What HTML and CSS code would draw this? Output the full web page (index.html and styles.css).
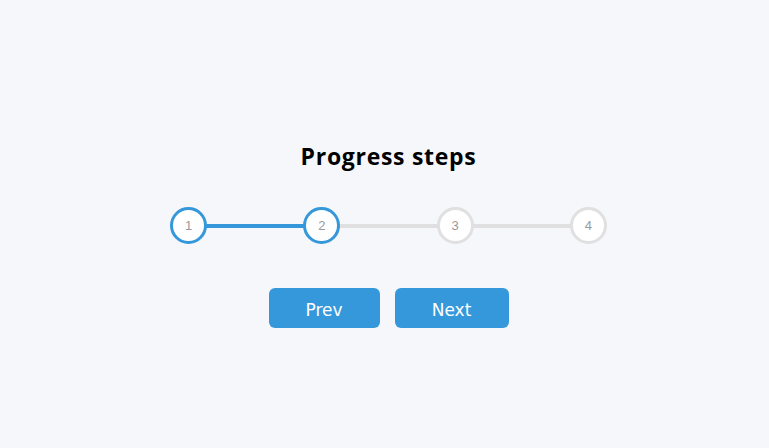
FILE: index.html
```html
<!DOCTYPE html>
<html lang="en">
<head>
<meta charset="utf-8">
<title>Progress steps</title>
<link rel="stylesheet" href="styles.css">
</head>
<body>
<main class="page">
  <h1 class="title">Progress steps</h1>
  <div class="steps">
    <div class="track"></div>
    <div class="track-fill" style="width: 33.33%"></div>
    <div class="circle active">1</div>
    <div class="circle active">2</div>
    <div class="circle">3</div>
    <div class="circle">4</div>
  </div>
  <div class="actions">
    <button class="btn btn-prev">Prev</button>
    <button class="btn btn-next">Next</button>
  </div>
</main>
</body>
</html>
```
FILE: styles.css
```css
html, body {
  margin: 0;
  padding: 0;
}
body {
  background: #f6f7fb;
  font-family: "Open Sans", "Noto Sans", sans-serif;
  height: 448px;
  overflow: hidden;
}
.page {
  display: flex;
  flex-direction: column;
  align-items: center;
  padding-top: 143px;
  padding-left: 8px;
}
.title {
  margin: 0;
  font-size: 23px;
  line-height: 26px;
  font-weight: 700;
  letter-spacing: 0.7px;
  color: #000;
  font-family: "Open Sans", "Noto Sans", sans-serif;
}
.steps {
  position: relative;
  width: 437px;
  margin-top: 38px;
  display: flex;
  justify-content: space-between;
  align-items: center;
}
.track, .track-fill {
  position: absolute;
  top: 50%;
  left: 18px;
  height: 4px;
  transform: translateY(-50%);
}
.track {
  right: 18px;
  background: #e0e0e0;
}
.track-fill {
  background: #3498db;
  max-width: calc(100% - 36px);
}
.circle {
  position: relative;
  box-sizing: border-box;
  width: 37px;
  height: 37px;
  border-radius: 50%;
  background: #fff;
  border: 3px solid #e0e0e0;
  color: #999;
  font-family: "Liberation Sans", Arial, sans-serif;
  font-size: 13px;
  display: flex;
  align-items: center;
  justify-content: center;
}
.circle.active {
  border-color: #3498db;
}
.actions {
  margin-top: 44px;
  display: flex;
  gap: 15px;
}
.btn {
  background: #3498db;
  color: #fff;
  border: 0;
  border-radius: 6px;
  font-family: "DejaVu Sans", Verdana, sans-serif;
  font-size: 17px;
  height: 40px;
  padding: 3px 0 0;
  cursor: pointer;
}
.btn-prev {
  width: 111px;
}
.btn-next {
  width: 114px;
}
```
